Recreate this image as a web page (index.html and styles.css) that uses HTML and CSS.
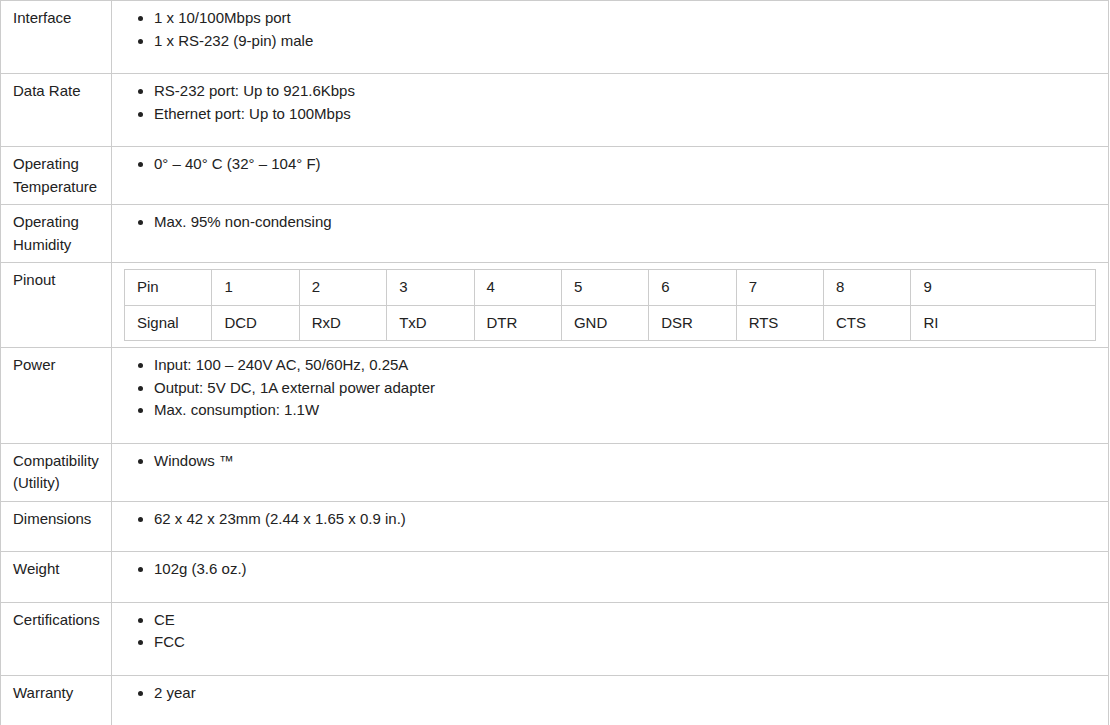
FILE: index.html
```html
<!DOCTYPE html>
<html>
<head>
<meta charset="utf-8">
<link rel="stylesheet" href="styles.css">
</head>
<body>
<table class="specs">
  <colgroup><col class="label-col"><col></colgroup>
  <tbody>
    <tr><td>Interface</td><td><ul><li>1 x 10/100Mbps port</li><li>1 x RS-232 (9-pin) male</li></ul></td></tr>
    <tr><td>Data Rate</td><td><ul><li>RS-232 port: Up to 921.6Kbps</li><li>Ethernet port: Up to 100Mbps</li></ul></td></tr>
    <tr><td>Operating Temperature</td><td><ul><li>0° – 40° C (32° – 104° F)</li></ul></td></tr>
    <tr><td>Operating Humidity</td><td><ul><li>Max. 95% non-condensing</li></ul></td></tr>
    <tr><td>Pinout</td><td>
      <table class="pinout">
        <tbody>
          <tr><td>Pin</td><td>1</td><td>2</td><td>3</td><td>4</td><td>5</td><td>6</td><td>7</td><td>8</td><td>9</td></tr>
          <tr><td>Signal</td><td>DCD</td><td>RxD</td><td>TxD</td><td>DTR</td><td>GND</td><td>DSR</td><td>RTS</td><td>CTS</td><td>RI</td></tr>
        </tbody>
      </table>
    </td></tr>
    <tr><td>Power</td><td><ul><li>Input: 100 – 240V AC, 50/60Hz, 0.25A</li><li>Output: 5V DC, 1A external power adapter</li><li>Max. consumption: 1.1W</li></ul></td></tr>
    <tr><td>Compatibility (Utility)</td><td><ul><li>Windows ™</li></ul></td></tr>
    <tr><td>Dimensions</td><td><ul><li>62 x 42 x 23mm (2.44 x 1.65 x 0.9 in.)</li></ul></td></tr>
    <tr><td>Weight</td><td><ul><li>102g (3.6 oz.)</li></ul></td></tr>
    <tr><td>Certifications</td><td><ul><li>CE</li><li>FCC</li></ul></td></tr>
    <tr><td>Warranty</td><td><ul><li>2 year</li></ul></td></tr>
  </tbody>
</table>
</body>
</html>
```

FILE: styles.css
```css
html, body {
  margin: 0;
  padding: 0;
  background: #fff;
}
body {
  font-family: "Liberation Sans", Arial, sans-serif;
  font-size: 15px;
  line-height: 1.5;
  color: #222;
}
.specs {
  border-collapse: collapse;
  table-layout: fixed;
  width: 1109px;
}
.label-col {
  width: 111px;
}
.specs > tbody > tr > td {
  border: 1px solid #ccc;
  padding: 6px 12px;
  vertical-align: top;
}
.specs ul {
  margin: 0 0 15px 0;
  padding-left: 30px;
}
.pinout {
  border-collapse: collapse;
  width: 100%;
}
.pinout td {
  border: 1px solid #ccc;
  padding: 6px 12px;
  width: 9%;
  vertical-align: top;
}
.pinout td:last-child {
  width: auto;
}
```
